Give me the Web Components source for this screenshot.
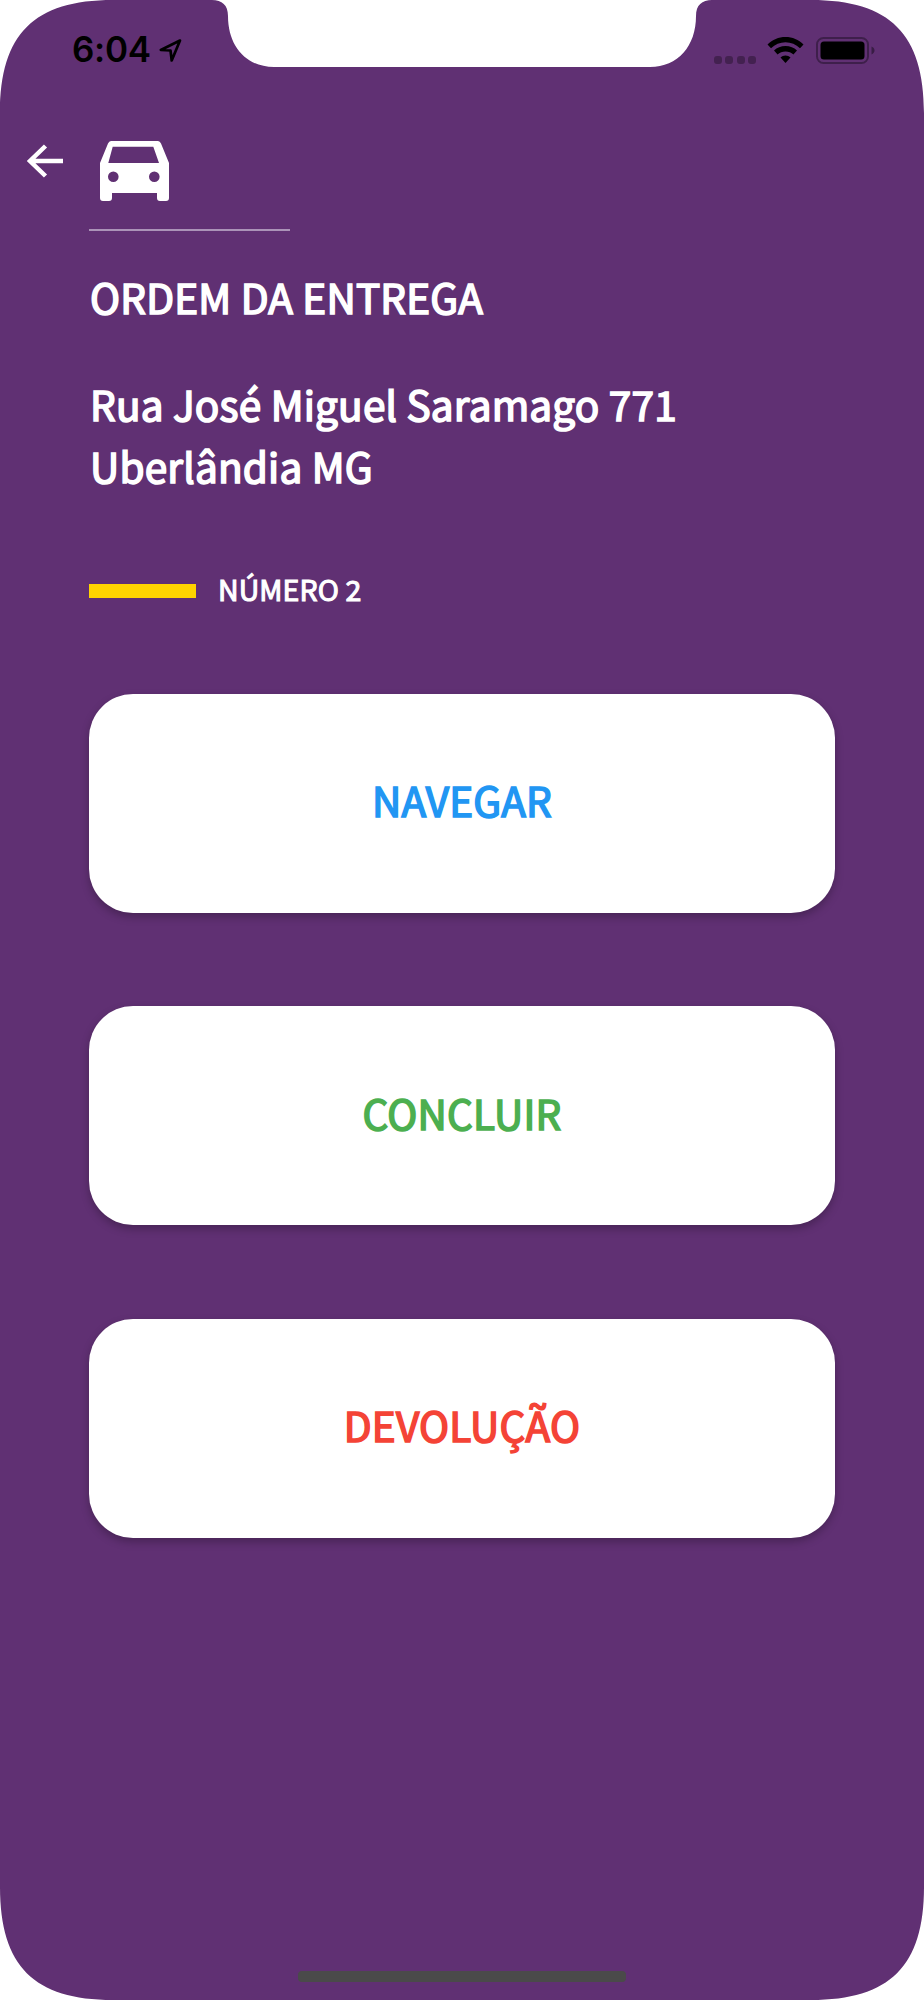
<!DOCTYPE html>
<html lang="pt-BR"><head><meta charset="utf-8"><title>Ordem da entrega</title>
<style>
html,body{margin:0;padding:0;background:#fff}
body{font-family:"Noto Sans CJK SC","Source Sans Pro","Noto Sans",sans-serif}
</style></head><body>
<phone-screen>
  <status-bar></status-bar>
  <delivery-header></delivery-header>
  <delivery-info street="Rua José Miguel Saramago 771" city="Uberlândia MG" number="NÚMERO 2"></delivery-info>
  <action-list>
    <action-button color="#2196F3">NAVEGAR</action-button>
    <action-button color="#4CAF50">CONCLUIR</action-button>
    <action-button color="#F44336">DEVOLUÇÃO</action-button>
  </action-list>
  <home-bar></home-bar>
</phone-screen>
<script>
function def(name,html){
  customElements.define(name,class extends HTMLElement{
    constructor(){super();this.attachShadow({mode:'open'}).innerHTML=typeof html==='function'?html(this):html;}
  });
}
def('phone-screen',`<style>
:host{display:flex;flex-direction:column;width:924px;height:2000px;background:#603073;
clip-path:path("M113 0H212C222 0 228 5 228 16C228 46 246 67 274 67H650C678 67 696 46 696 16C696 5 702 0 712 0H811C890 0 924 34 924 113V1887C924 1966 890 2000 811 2000H113C34 2000 0 1966 0 1887V113C0 34 34 0 113 0Z");}
</style><slot></slot>`);
def('status-bar',`<style>
:host{display:flex;height:122px;box-sizing:border-box;padding:24px 48px 0 72px;align-items:flex-start;font-family:Inter,"Liberation Sans",sans-serif;color:#000}
.time{font-size:35px;font-weight:600;line-height:50px;letter-spacing:-.3px}
.loc{margin:14px 0 0 5px;width:27px;height:27px}
.right{margin-left:auto;display:flex;align-items:flex-start;padding-top:13px}
.dots{display:flex;gap:3.5px;margin:19px 0 0 0}
.dots i{width:8px;height:7.5px;border-radius:3px;background:rgba(0,0,0,.3)}
.wifi{margin-left:11px;width:37px;height:27px}
.bat{margin-left:12px;width:60px;height:27px}
</style>
<span class="time">6:04</span>
<svg class="loc" viewBox="0 0 27 27"><path d="M24 2.500 4.800 12 14.500 12.500 15.700 22.500Z" fill="none" stroke="#000" stroke-width="2.700" stroke-linejoin="round"/></svg>
<div class="right"><div class="dots"><i></i><i></i><i></i><i></i></div>
<svg class="wifi" viewBox="0 0 37 27"><path d="M18.5 0C11.500 0 5.500 2.600 .5 7.400L4 11.200C8 7.400 13 5.200 18.500 5.200S29 7.400 33 11.200L36.500 7.400C31.500 2.600 25.500 0 18.500 0Z"/><path d="M18.500 9C14 9 10 10.600 7 13.600L10.600 17.500C12.600 15.600 15.400 14.400 18.500 14.400S24.400 15.600 26.400 17.500L30 13.600C27 10.600 23 9 18.500 9Z"/><path d="M18.500 18.400C16.500 18.400 14.800 19.100 13.500 20.400L18.500 26 23.500 20.400C22.200 19.100 20.500 18.400 18.500 18.400Z"/></svg>
<svg class="bat" viewBox="0 0 60 27"><rect x="1" y="1" width="51" height="25" rx="6.500" fill="none" stroke="#000" stroke-opacity=".35" stroke-width="2"/><rect x="4.500" y="4.500" width="44" height="18" rx="3.500"/><path d="M55.500 9.500C57.500 10.200 58.500 11.800 58.500 13.500S57.500 16.800 55.500 17.500Z" fill="#000" fill-opacity=".4"/></svg></div>`);
def('delivery-header',`<style>
:host{display:flex;flex-direction:column;padding:0}
.row{display:flex;height:90px;align-items:flex-start}
.back{width:40px;height:40px;margin:19px 35px 0 25px}
.car{width:69px;height:60px;margin-top:19px}
.rule{margin:17px 0 0 89px;width:201px;height:1.500px;background:#ab93b8}
</style><div class="row">
<svg class="back" viewBox="0 0 40 40"><path d="M38 20H6M20.500 5 5 20 20.500 35" fill="none" stroke="#fff" stroke-width="4.500"/></svg>
<svg class="car" viewBox="0 0 69 60"><path fill="#fff" fill-rule="evenodd" d="M11 0H58Q60 0 61 2.500L69 22V57Q69 60 66 60H60Q57 60 57 57V52H12V57Q12 60 9 60H3Q0 60 0 57V22L8 2.500Q9 0 11 0ZM12.700 5.700H53.300L59 22H8.300ZM13.300 30.400A5.300 5.300 0 1 0 13.300 41 5.300 5.300 0 1 0 13.300 30.400ZM54.300 30.400A5.300 5.300 0 1 0 54.300 41 5.300 5.300 0 1 0 54.300 30.400Z"/></svg>
</div><div class="rule"></div>`);
def('delivery-info',h=>`<style>
:host{display:block;padding:36px 0 0 90px;color:#fff;font-weight:400;-webkit-text-stroke:1.600px currentColor;letter-spacing:.2px}
.title{font-size:40.500px;line-height:60px}
.addr{margin-top:46px;font-size:40.500px;line-height:62px}
.num{display:flex;align-items:center;margin:73px 0 0 -1px;height:40px;gap:22px;font-size:28.500px;letter-spacing:.1px;-webkit-text-stroke:1.100px currentColor}
.bar{width:107px;height:14px;margin-top:2px;background:#ffd300}
.n{margin-bottom:2px}
</style><div class="title">ORDEM DA ENTREGA</div>
<div class="addr">${h.getAttribute('street')}<br>${h.getAttribute('city')}</div>
<div class="num"><span class="bar"></span><span class="n">${h.getAttribute('number')}</span></div>`);
def('action-list',`<style>:host{display:flex;flex-direction:column;gap:93.500px;padding:84px 89px 0}</style><slot></slot>`);
def('action-button',h=>`<style>
:host{display:flex;align-items:center;justify-content:center;box-sizing:border-box;height:219px;padding-bottom:7px;background:#fff;border-radius:44px;box-shadow:0 4px 8px rgba(0,0,0,.25);font-size:40.500px;letter-spacing:.2px;font-weight:400;-webkit-text-stroke:1.600px currentColor;color:${h.getAttribute('color')}}
</style><slot></slot>`);
def('home-bar',`<style>:host{display:block;margin:auto 0 18px 298px;width:328px;height:11px;border-radius:4px;background:#4a4a4a}</style>`);
</script>
</body></html>
